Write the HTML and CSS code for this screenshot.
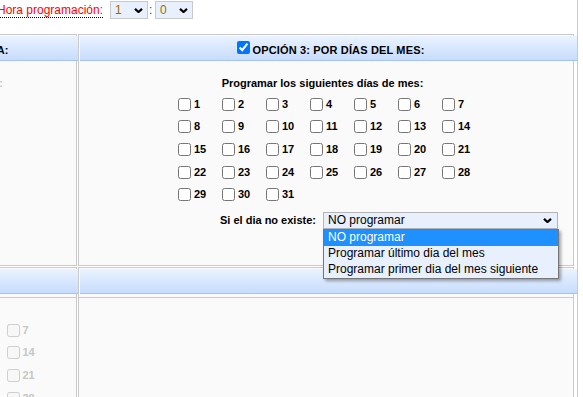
FILE: index.html
```html
<!DOCTYPE html>
<html lang="es">
<head>
<meta charset="utf-8">
<title>Programación</title>
<link rel="stylesheet" href="styles.css">
</head>
<body>
<div class="page">
  <div class="topbar">
    <span class="hora">Hora programación:</span>
    <div class="mini-select"><span class="val">1</span><svg class="chev" viewBox="0 0 9 5" width="9" height="5"><path d="M1 .9 4.5 4 8 .9" fill="none" stroke="#000" stroke-width="2.2"/></svg></div>
    <span class="colon">:</span>
    <div class="mini-select"><span class="val">0</span><svg class="chev" viewBox="0 0 9 5" width="9" height="5"><path d="M1 .9 4.5 4 8 .9" fill="none" stroke="#000" stroke-width="2.2"/></svg></div>
  </div>

  <div class="row row-main">
    <div class="box box-left">
      <div class="head head-left"><input type="checkbox"><span class="head-text">OPCIÓN 2: POR DÍAS DE LA SEMANA:</span></div>
      <div class="body body-top">
        <p class="intro intro-off">Programar los siguientes días de la semana:</p>
      </div>
    </div>
    <div class="box box-right">
      <div class="head"><input type="checkbox" checked><span class="head-text">OPCIÓN 3: POR DÍAS DEL MES:</span></div>
      <div class="body body-top">
        <p class="intro">Programar los siguientes días de mes:</p>
        <div class="days">
          <label class="day"><input type="checkbox"><span>1</span></label>
          <label class="day"><input type="checkbox"><span>2</span></label>
          <label class="day"><input type="checkbox"><span>3</span></label>
          <label class="day"><input type="checkbox"><span>4</span></label>
          <label class="day"><input type="checkbox"><span>5</span></label>
          <label class="day"><input type="checkbox"><span>6</span></label>
          <label class="day"><input type="checkbox"><span>7</span></label>
          <label class="day"><input type="checkbox"><span>8</span></label>
          <label class="day"><input type="checkbox"><span>9</span></label>
          <label class="day"><input type="checkbox"><span>10</span></label>
          <label class="day"><input type="checkbox"><span>11</span></label>
          <label class="day"><input type="checkbox"><span>12</span></label>
          <label class="day"><input type="checkbox"><span>13</span></label>
          <label class="day"><input type="checkbox"><span>14</span></label>
          <label class="day"><input type="checkbox"><span>15</span></label>
          <label class="day"><input type="checkbox"><span>16</span></label>
          <label class="day"><input type="checkbox"><span>17</span></label>
          <label class="day"><input type="checkbox"><span>18</span></label>
          <label class="day"><input type="checkbox"><span>19</span></label>
          <label class="day"><input type="checkbox"><span>20</span></label>
          <label class="day"><input type="checkbox"><span>21</span></label>
          <label class="day"><input type="checkbox"><span>22</span></label>
          <label class="day"><input type="checkbox"><span>23</span></label>
          <label class="day"><input type="checkbox"><span>24</span></label>
          <label class="day"><input type="checkbox"><span>25</span></label>
          <label class="day"><input type="checkbox"><span>26</span></label>
          <label class="day"><input type="checkbox"><span>27</span></label>
          <label class="day"><input type="checkbox"><span>28</span></label>
          <label class="day"><input type="checkbox"><span>29</span></label>
          <label class="day"><input type="checkbox"><span>30</span></label>
          <label class="day"><input type="checkbox"><span>31</span></label>
        </div>
        <div class="noexist">
          <span class="ne-label">Si el dia no existe:</span>
          <div class="select">
            <span class="sel-text">NO programar</span>
            <svg class="chev" viewBox="0 0 9 5" width="9" height="5"><path d="M1 .9 4.5 4 8 .9" fill="none" stroke="#000" stroke-width="2.2"/></svg>
            <ul class="popup">
              <li class="is-selected">NO programar</li>
              <li>Programar último dia del mes</li>
              <li>Programar primer dia del mes siguiente</li>
            </ul>
          </div>
        </div>
      </div>
    </div>
  </div>

  <div class="row row-subhead">
    <div class="box box-left box-open"><div class="head head-left"></div></div>
    <div class="box box-right box-open"><div class="head"></div></div>
  </div>

  <div class="row row-subbody">
    <div class="box box-left box-tall">
      <div class="body body-sub">
        <div class="days days-off">
          <label class="day"><input type="checkbox" disabled><span>1</span></label>
          <label class="day"><input type="checkbox" disabled><span>2</span></label>
          <label class="day"><input type="checkbox" disabled><span>3</span></label>
          <label class="day"><input type="checkbox" disabled><span>4</span></label>
          <label class="day"><input type="checkbox" disabled><span>5</span></label>
          <label class="day"><input type="checkbox" disabled><span>6</span></label>
          <label class="day"><input type="checkbox" disabled><span>7</span></label>
          <label class="day"><input type="checkbox" disabled><span>8</span></label>
          <label class="day"><input type="checkbox" disabled><span>9</span></label>
          <label class="day"><input type="checkbox" disabled><span>10</span></label>
          <label class="day"><input type="checkbox" disabled><span>11</span></label>
          <label class="day"><input type="checkbox" disabled><span>12</span></label>
          <label class="day"><input type="checkbox" disabled><span>13</span></label>
          <label class="day"><input type="checkbox" disabled><span>14</span></label>
          <label class="day"><input type="checkbox" disabled><span>15</span></label>
          <label class="day"><input type="checkbox" disabled><span>16</span></label>
          <label class="day"><input type="checkbox" disabled><span>17</span></label>
          <label class="day"><input type="checkbox" disabled><span>18</span></label>
          <label class="day"><input type="checkbox" disabled><span>19</span></label>
          <label class="day"><input type="checkbox" disabled><span>20</span></label>
          <label class="day"><input type="checkbox" disabled><span>21</span></label>
          <label class="day"><input type="checkbox" disabled><span>22</span></label>
          <label class="day"><input type="checkbox" disabled><span>23</span></label>
          <label class="day"><input type="checkbox" disabled><span>24</span></label>
          <label class="day"><input type="checkbox" disabled><span>25</span></label>
          <label class="day"><input type="checkbox" disabled><span>26</span></label>
          <label class="day"><input type="checkbox" disabled><span>27</span></label>
          <label class="day"><input type="checkbox" disabled><span>28</span></label>
          <label class="day"><input type="checkbox" disabled><span>29</span></label>
          <label class="day"><input type="checkbox" disabled><span>30</span></label>
          <label class="day"><input type="checkbox" disabled><span>31</span></label>
        </div>
      </div>
    </div>
    <div class="box box-right box-tall"></div>
  </div>
</div>
</body>
</html>
```

FILE: styles.css
```css
* { box-sizing: border-box; }

html, body {
  margin: 0;
  background: #fff;
}

body {
  font-family: "Liberation Sans", Arial, sans-serif;
  font-size: 12px;
  color: #000;
  overflow: hidden;
}

.page {
  margin-left: -296px;
  width: 874px;
  height: 397px;
  overflow: hidden;
  padding-right: 3px;
  border-right: 1px solid #cacaca;
}

/* top bar */
.topbar {
  height: 34px;
  padding: 1px 0 0 293px;
  display: flex;
  align-items: flex-start;
}

.hora {
  color: #f00;
  line-height: 13px;
  margin-top: 3px;
  border-bottom: 1px dotted #000;
  white-space: nowrap;
}

.mini-select {
  margin-left: 7px;
  width: 38px;
  height: 18px;
  display: flex;
  align-items: center;
  justify-content: space-between;
  padding: 0 4px 0 4px;
  border: 1px solid #c9c9c9;
  background: #e8f0fd;
  color: #9c6b00;
  line-height: 14px;
}

.colon {
  width: 7px;
  padding-left: 1px;
  line-height: 18px;
  color: #444;
}

.colon + .mini-select { margin-left: 0; }

.chev { display: block; flex: none; }

/* rows of boxes */
.row {
  display: grid;
  grid-template-columns: 373px 496px;
  column-gap: 1px;
}

.row-main { margin-bottom: 1px; }

.box {
  border: 1px solid #cacaca;
  background: #fafafa;
  padding: 1px;
}

.row-main .box { height: 232px; }

.box-open {
  border-bottom: 0;
  padding-bottom: 3px;
}

.box-tall { height: 110px; }

.head {
  height: 25px;
  margin-right: -5px;
  padding-bottom: 3px;
  background: linear-gradient(#eaf3ff, #c7dcfd);
  border-bottom: 1px solid #a6c2f5;
  display: flex;
  justify-content: center;
  align-items: flex-end;
  font-weight: bold;
  font-size: 11px;
  line-height: 13px;
}

.head-left {
  margin-right: -3px;
  padding-left: 6px;
}

.head input {
  margin: 3px 3px 3px 4px;
  width: 13px;
  height: 13px;
}

.head-text {
  letter-spacing: 0.15px;
  white-space: nowrap;
}

/* body content */
.body-top { padding-top: 16px; }

.body-sub { padding-top: 20px; }

.intro {
  margin: 0;
  padding-right: 7px;
  font-weight: bold;
  font-size: 11px;
  line-height: 13px;
  text-align: center;
  white-space: nowrap;
}

.intro-off {
  color: #c4c4c4;
  padding-right: 8px;
}

.days {
  width: 308px;
  margin: 3px auto 0;
  display: grid;
  grid-template-columns: repeat(7, 44px);
  grid-auto-rows: 22.6px;
}

.body-sub .days { margin-top: 0; }

.day {
  display: flex;
  align-items: center;
  font-weight: bold;
  font-size: 11px;
  line-height: 13px;
}

.day input {
  margin: 0 3px 0 6px;
  width: 13px;
  height: 13px;
}

.days-off .day { color: #c6c6c6; }

/* select row */
.noexist {
  margin: 6px 0 0 140px;
  display: flex;
  align-items: center;
}

.ne-label {
  font-weight: bold;
  font-size: 11px;
  line-height: 13px;
  white-space: nowrap;
}

.select {
  position: relative;
  margin-left: 7px;
  width: 235px;
  height: 17px;
  display: flex;
  align-items: center;
  justify-content: space-between;
  padding: 0 5px 0 4px;
  border: 1px solid #b5b5b5;
  background: #e8f0fe;
  line-height: 15px;
  white-space: nowrap;
}

.popup {
  position: absolute;
  left: -1px;
  top: 16px;
  width: 236px;
  margin: 0;
  padding: 0;
  list-style: none;
  border: 1px solid #767676;
  background: #e8f0fe;
  box-shadow: 2px 2px 3px rgba(0, 0, 0, 0.35);
  z-index: 5;
}

.popup li {
  height: 16px;
  padding: 0 0 2px 4px;
  line-height: 14px;
  white-space: nowrap;
}

.popup li.is-selected {
  background: #1e90ff;
  color: #fff;
}
```
